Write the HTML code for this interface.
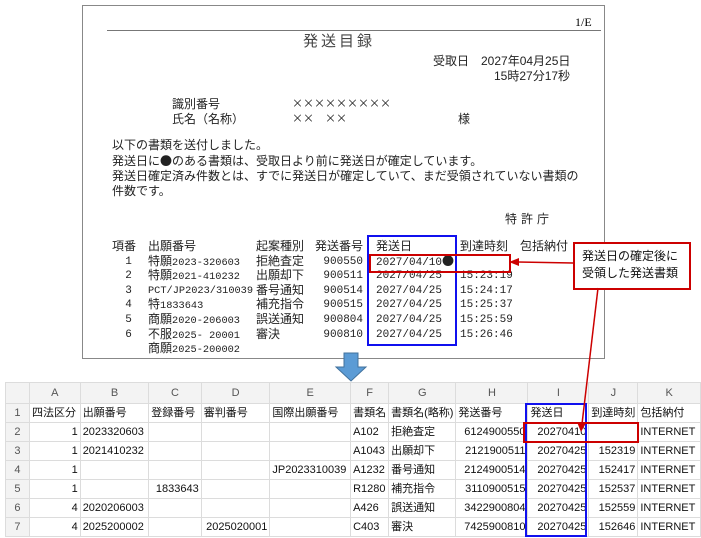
<!DOCTYPE html>
<html><head><meta charset="utf-8"><style>
body{margin:0;width:701px;height:538px;background:#fff;position:relative;overflow:hidden;font-family:"Liberation Sans","Noto Sans CJK JP",sans-serif;}
.a{position:absolute;white-space:nowrap;}
.m{font-family:"Liberation Mono","Noto Sans CJK JP",monospace;font-size:11px;color:#222;}
.m div{height:14.6px;line-height:14px;}
.m b{font-weight:normal;font-family:"Noto Sans CJK JP",sans-serif;font-size:12px;line-height:12px;}
.j{font-family:"Liberation Sans","Noto Sans CJK JP",sans-serif;font-size:12px;color:#222;}
.c{font-family:"Noto Sans CJK JP",sans-serif;}
table{position:absolute;left:5px;top:382px;border-collapse:collapse;font-size:11px;font-family:"Liberation Sans","Noto Sans CJK JP",sans-serif;color:#111;table-layout:fixed;}
td{border:1px solid #dcdcdc;height:18px;line-height:18px;padding:0 2px;white-space:nowrap;overflow:hidden;}
tr:first-child td{background:#f3f3f3;color:#555;text-align:center;height:20px;}
td:first-child{background:#f3f3f3;color:#555;text-align:center;}
.r{text-align:right;}
</style></head><body>
<div class="a" style="left:82px;top:5px;width:521px;height:352px;border:1px solid #888;"></div>
<div class="a" style="left:107px;top:30px;width:494px;border-top:1px solid #777;"></div>
<div class="a" style="left:575px;top:15px;font-family:'Liberation Serif',serif;font-size:12px;">1/E</div>
<div class="a j" style="left:303px;top:30px;font-size:15px;letter-spacing:3px;color:#444;">発送目録</div>
<div class="a j" style="left:433px;top:52px;">受取日　2027年04月25日</div>
<div class="a j" style="left:494px;top:67px;">15時27分17秒</div>
<div class="a j" style="left:172px;top:95px;">識別番号</div>
<div class="a j c" style="left:292px;top:95px;font-size:11px;">×××××××××</div>
<div class="a j" style="left:172px;top:110px;">氏名（名称）</div>
<div class="a j c" style="left:292px;top:110px;font-size:11px;">××　××</div>
<div class="a j" style="left:458px;top:110px;">様</div>
<div class="a j" style="left:112px;top:138px;line-height:15px;">以下の書類を送付しました。<br>発送日に<span class="c">●</span>のある書類は、受取日より前に発送日が確定しています。<br>発送日確定済み件数とは、すでに発送日が確定していて、まだ受領されていない書類の<br>件数です。</div>
<div class="a j" style="left:505px;top:210px;letter-spacing:4px;">特許庁</div>
<div class="a m" style="left:112px;top:240px;"><div><b>項番</b></div><div>&nbsp;&nbsp;1</div><div>&nbsp;&nbsp;2</div><div>&nbsp;&nbsp;3</div><div>&nbsp;&nbsp;4</div><div>&nbsp;&nbsp;5</div><div>&nbsp;&nbsp;6</div></div>
<div class="a m" style="left:148px;top:240px;font-size:10.3px;"><div><b>出願番号</b></div><div><b>特願</b>2023-320603</div><div><b>特願</b>2021-410232</div><div>PCT/JP2023/310039</div><div><b>特</b>1833643</div><div><b>商願</b>2020-206003</div><div><b>不服</b>2025- 20001</div><div><b>商願</b>2025-200002</div></div>
<div class="a m" style="left:256px;top:240px;"><div><b>起案種別</b></div><div><b>拒絶査定</b></div><div><b>出願却下</b></div><div><b>番号通知</b></div><div><b>補充指令</b></div><div><b>誤送通知</b></div><div><b>審決</b></div></div>
<div class="a m" style="left:315px;top:240px;text-align:right;"><div><b>発送番号</b></div><div>900550</div><div>900511</div><div>900514</div><div>900515</div><div>900804</div><div>900810</div></div>
<div class="a m" style="left:376px;top:240px;"><div><b>発送日</b></div><div>2027/04/10<b>●</b></div><div>2027/04/25</div><div>2027/04/25</div><div>2027/04/25</div><div>2027/04/25</div><div>2027/04/25</div></div>
<div class="a m" style="left:460px;top:240px;"><div><b>到達時刻</b></div><div></div><div>15:23:19</div><div>15:24:17</div><div>15:25:37</div><div>15:25:59</div><div>15:26:46</div></div>
<div class="a m" style="left:520px;top:240px;"><div><b>包括納付</b></div></div>
<div class="a" style="left:367px;top:235px;width:86px;height:107px;border:2px solid #1010ee;"></div>
<div class="a" style="left:369px;top:254px;width:138px;height:15px;border:2px solid #c00;"></div>
<div class="a" style="left:573px;top:242px;width:114px;height:44px;border:2px solid #c00;background:#fff;"></div>
<div class="a j" style="left:582px;top:248px;font-size:12px;line-height:17px;color:#111;">発送日の確定後に<br>受領した発送書類</div>
<table>
<tr><td style="width:21px"></td><td style="width:46px">A</td><td style="width:64px">B</td><td style="width:48px">C</td><td style="width:64px">D</td><td style="width:76px">E</td><td style="width:32px">F</td><td style="width:60px">G</td><td style="width:68px">H</td><td style="width:57px">I</td><td style="width:44px">J</td><td style="width:58px">K</td></tr>
<tr><td>1</td><td>四法区分</td><td>出願番号</td><td>登録番号</td><td>審判番号</td><td>国際出願番号</td><td>書類名</td><td>書類名(略称)</td><td>発送番号</td><td>発送日</td><td>到達時刻</td><td>包括納付</td></tr>
<tr><td>2</td><td class="r">1</td><td>2023320603</td><td></td><td></td><td></td><td>A102</td><td>拒絶査定</td><td class="r">6124900550</td><td class="r">20270410</td><td></td><td>INTERNET</td></tr>
<tr><td>3</td><td class="r">1</td><td>2021410232</td><td></td><td></td><td></td><td>A1043</td><td>出願却下</td><td class="r">2121900511</td><td class="r">20270425</td><td class="r">152319</td><td>INTERNET</td></tr>
<tr><td>4</td><td class="r">1</td><td></td><td></td><td></td><td>JP2023310039</td><td>A1232</td><td>番号通知</td><td class="r">2124900514</td><td class="r">20270425</td><td class="r">152417</td><td>INTERNET</td></tr>
<tr><td>5</td><td class="r">1</td><td></td><td class="r">1833643</td><td></td><td></td><td>R1280</td><td>補充指令</td><td class="r">3110900515</td><td class="r">20270425</td><td class="r">152537</td><td>INTERNET</td></tr>
<tr><td>6</td><td class="r">4</td><td>2020206003</td><td></td><td></td><td></td><td>A426</td><td>誤送通知</td><td class="r">3422900804</td><td class="r">20270425</td><td class="r">152559</td><td>INTERNET</td></tr>
<tr><td>7</td><td class="r">4</td><td>2025200002</td><td></td><td class="r">2025020001</td><td></td><td>C403</td><td>審決</td><td class="r">7425900810</td><td class="r">20270425</td><td class="r">152646</td><td>INTERNET</td></tr>
</table>
<div class="a" style="left:525px;top:403px;width:58px;height:130px;border:2px solid #1010ee;"></div>
<div class="a" style="left:523px;top:422px;width:112px;height:17px;border:2px solid #c00;"></div>
<svg class="a" style="left:0;top:0" width="701" height="538">
<line x1="573" y1="263" x2="518" y2="262" stroke="#c00" stroke-width="1.5"/>
<polygon points="509,262 519,258 519,266" fill="#c00"/>
<line x1="598" y1="288" x2="582" y2="424" stroke="#c00" stroke-width="1.5"/>
<polygon points="581,432 577,422 586,423" fill="#c00"/>
<polygon points="344,353 358,353 358,367 366,367 351,381 336,367 344,367" fill="#5b9bd5" stroke="#41719c" stroke-width="1"/>
</svg>
</body></html>
